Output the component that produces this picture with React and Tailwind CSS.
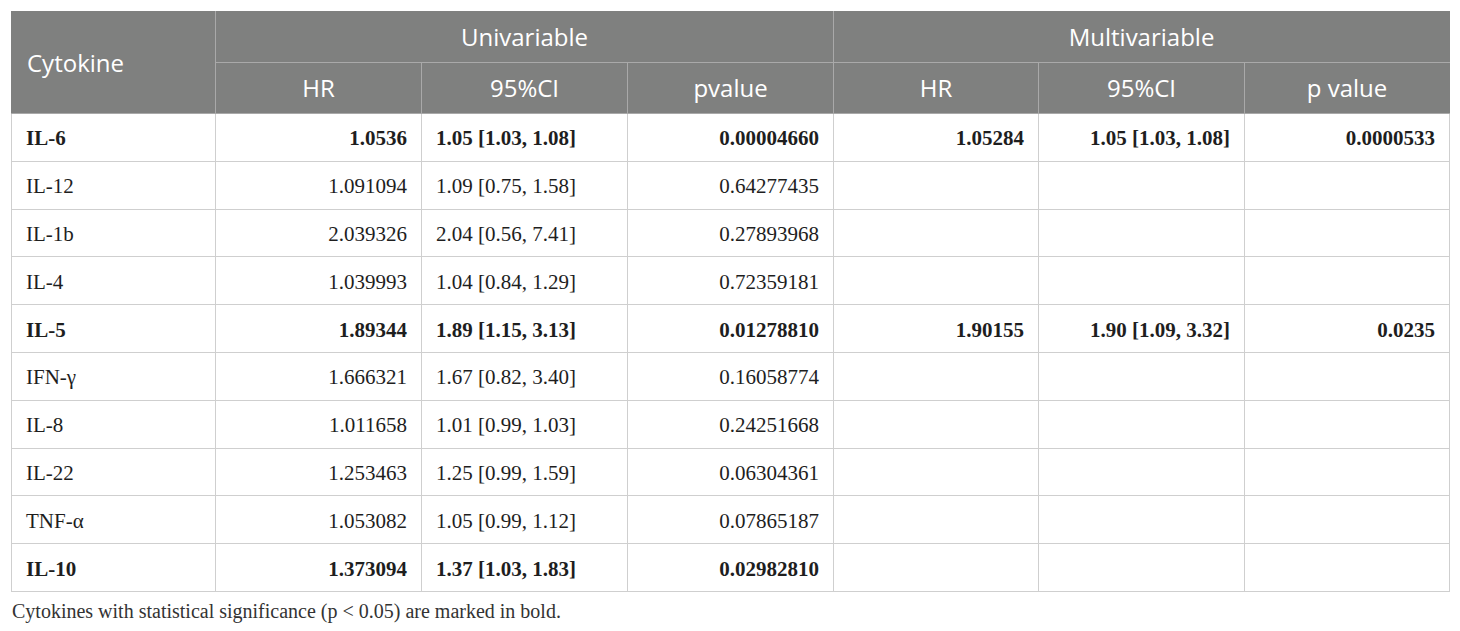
import React from 'react';

const rows = [
  { name: 'IL-6', hr: '1.0536', ci: '1.05 [1.03, 1.08]', p: '0.00004660', mhr: '1.05284', mci: '1.05 [1.03, 1.08]', mp: '0.0000533', bold: true },
  { name: 'IL-12', hr: '1.091094', ci: '1.09 [0.75, 1.58]', p: '0.64277435' },
  { name: 'IL-1b', hr: '2.039326', ci: '2.04 [0.56, 7.41]', p: '0.27893968' },
  { name: 'IL-4', hr: '1.039993', ci: '1.04 [0.84, 1.29]', p: '0.72359181' },
  { name: 'IL-5', hr: '1.89344', ci: '1.89 [1.15, 3.13]', p: '0.01278810', mhr: '1.90155', mci: '1.90 [1.09, 3.32]', mp: '0.0235', bold: true },
  { name: 'IFN-γ', hr: '1.666321', ci: '1.67 [0.82, 3.40]', p: '0.16058774' },
  { name: 'IL-8', hr: '1.011658', ci: '1.01 [0.99, 1.03]', p: '0.24251668' },
  { name: 'IL-22', hr: '1.253463', ci: '1.25 [0.99, 1.59]', p: '0.06304361' },
  { name: 'TNF-α', hr: '1.053082', ci: '1.05 [0.99, 1.12]', p: '0.07865187' },
  { name: 'IL-10', hr: '1.373094', ci: '1.37 [1.03, 1.83]', p: '0.02982810', bold: true },
];

const th = 'border border-[#a9a9a9] font-normal text-center';
const td = 'border border-[#cfcfcf] h-[47.8px] px-[14px] pt-[3px] align-middle leading-none';

export default function App() {
  return (
    <div className="bg-white w-[1460px] h-[631px] px-[11px] pt-[11px]">
      <table className="w-[1438px] table-fixed border-collapse">
        <colgroup>
          <col className="w-[204px]" />
          <col className="w-[206px]" />
          <col className="w-[206px]" />
          <col className="w-[206px]" />
          <col className="w-[205px]" />
          <col className="w-[206px]" />
          <col className="w-[205px]" />
        </colgroup>
        <thead className="bg-[#7f807f] text-white font-['Open_Sans',sans-serif] text-[24px]">
          <tr className="h-[51px]">
            <th rowSpan={2} className={`${th} text-left pl-[15px] border-l-[#7f807f] border-t-[#7f807f]`}>
              Cytokine
            </th>
            <th colSpan={3} className={`${th} border-t-[#7f807f]`}>Univariable</th>
            <th colSpan={3} className={`${th} border-t-[#7f807f] border-r-[#7f807f]`}>Multivariable</th>
          </tr>
          <tr className="h-[51px]">
            <th className={th}>HR</th>
            <th className={th}>95%CI</th>
            <th className={th}>pvalue</th>
            <th className={th}>HR</th>
            <th className={th}>95%CI</th>
            <th className={`${th} border-r-[#7f807f]`}>p value</th>
          </tr>
        </thead>
        <tbody className="font-['Liberation_Serif',serif] text-[21px] text-[#1e1e1e]">
          {rows.map((r) => (
            <tr key={r.name} className={r.bold ? 'font-bold' : ''}>
              <td className={`${td} text-left`}>{r.name}</td>
              <td className={`${td} text-right`}>{r.hr}</td>
              <td className={`${td} text-left`}>{r.ci}</td>
              <td className={`${td} text-right`}>{r.p}</td>
              <td className={`${td} text-right`}>{r.mhr || ''}</td>
              <td className={`${td} text-right`}>{r.mci || ''}</td>
              <td className={`${td} text-right`}>{r.mp || ''}</td>
            </tr>
          ))}
        </tbody>
      </table>
      <p className="font-['Liberation_Serif',serif] text-[20px] leading-none text-[#333] mt-[9px] ml-[1px]">
        Cytokines with statistical significance (p &lt; 0.05) are marked in bold.
      </p>
    </div>
  );
}
